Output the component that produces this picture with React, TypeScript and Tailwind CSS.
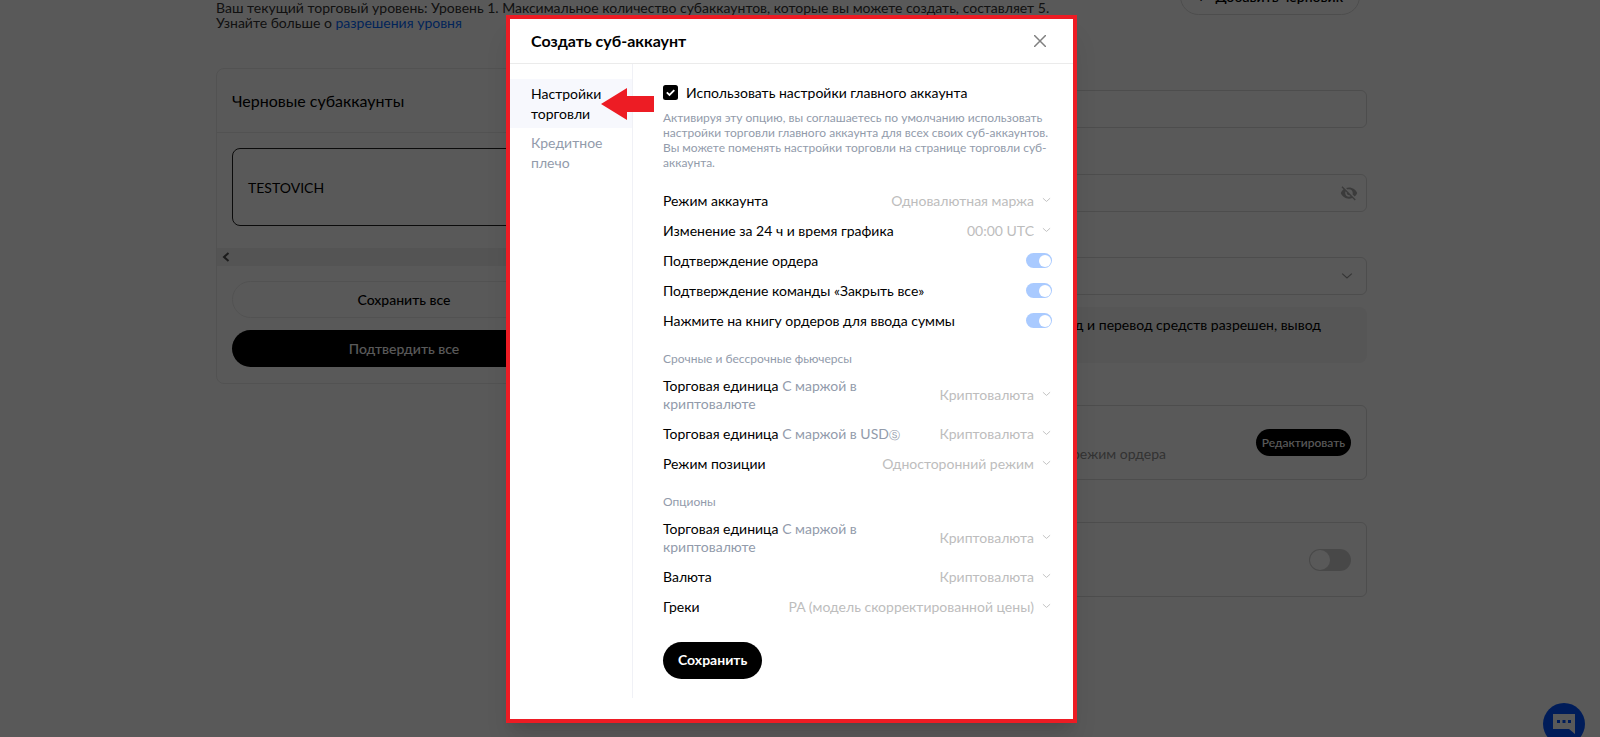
import { ReactNode, useId } from "react";

function Chevron({ className }: { className: string }) {
  return (
    <svg viewBox="0 0 10 6" fill="none" stroke="currentColor" className={className} aria-hidden="true">
      <path d="M1 1l4 3.6L9 1" />
    </svg>
  );
}

function SelectRow({ label, hint, value }: { label: string; hint?: ReactNode; value: string }) {
  const id = useId();
  return (
    <div className="flex items-center justify-between">
      <label htmlFor={id} className={hint ? "max-w-[250px]" : ""}>
        {label}
        {hint && <span className="text-[#929bab]"> {hint}</span>}
      </label>
      <div className="flex shrink-0 items-center gap-2 text-[#bdbdbd]">
        <select id={id} disabled className="h-[18px] appearance-none bg-transparent text-right leading-[18px] opacity-100">
          <option>{value}</option>
        </select>
        <Chevron className="mr-px mb-0.5 h-[6px] w-[9px]" />
      </div>
    </div>
  );
}

function SwitchRow({ label }: { label: string }) {
  const id = useId();
  return (
    <div className="flex items-center justify-between">
      <label htmlFor={id}>{label}</label>
      <input
        id={id}
        type="checkbox"
        role="switch"
        defaultChecked
        disabled
        className="flex h-[15px] w-[26px] appearance-none items-center justify-end rounded-full bg-[#a9caff] px-px before:size-3 before:rounded-full before:bg-white"
      />
    </div>
  );
}

function Section({ title, children }: { title: string; children: ReactNode }) {
  return (
    <section className="mt-5">
      <h3 className="mb-[9px] text-[12px] leading-[18px] text-[#929bab]">{title}</h3>
      <div className="flex flex-col gap-3">{children}</div>
    </section>
  );
}

function Drafts() {
  return (
    <section className="w-[376px] shrink-0 self-start rounded-lg border border-[#ebebeb] pb-4">
      <h2 className="border-b border-[#ebebeb] px-[15px] py-5 text-[16px] leading-[23px]">Черновые субаккаунты</h2>
      <div className="mx-[15px] mt-[15px] flex h-[78px] items-center rounded-lg border border-[#222] px-[15px]">TESTOVICH</div>
      <div className="mt-[22px] flex h-[18px] items-center bg-[#f1f1f1] pl-[5px] text-[#505050]">
        <svg viewBox="0 0 8 10" fill="none" stroke="currentColor" strokeWidth="2" className="h-[10px] w-2" aria-hidden="true">
          <path d="M6.5 1L2 5l4.500 4" />
        </svg>
      </div>
      <div className="mt-[15px] flex flex-col gap-3 px-[15px]">
        <button className="h-[37px] rounded-full border border-[#ebebeb] font-medium">Сохранить все</button>
        <button className="h-[37px] rounded-full bg-black font-medium text-white">Подтвердить все</button>
      </div>
    </section>
  );
}

function AccountForm() {
  return (
    <div className="min-w-0 flex-1 pt-[22px]">
      <input aria-label="Имя" className="block h-[38px] w-full rounded-md border border-[#dcdcdc]" />
      <div className="mt-[46px] flex h-[38px] items-center rounded-md border border-[#dcdcdc] pr-2">
        <input aria-label="Пароль" type="password" className="min-w-0 flex-1" />
        <svg viewBox="0 0 24 24" fill="#a8a8a8" className="size-[18px]" aria-hidden="true">
          <path d="M12 7c2.760 0 5 2.240 5 5 0 .65-.13 1.260-.36 1.830l2.920 2.920c1.510-1.260 2.700-2.890 3.430-4.750-1.730-4.390-6-7.500-11-7.500-1.400 0-2.740.25-3.980.7l2.160 2.160C10.740 7.130 11.350 7 12 7zM2 4.270l2.280 2.280.46.46C3.080 8.300 1.780 10.020 1 12c1.730 4.390 6 7.500 11 7.500 1.550 0 3.030-.3 4.380-.84l.42.42L19.730 22 21 20.730 3.270 3 2 4.270zM7.530 9.800l1.550 1.550c-.05.21-.08.43-.08.65 0 1.660 1.340 3 3 3 .22 0 .44-.03.65-.08l1.550 1.550c-.67.33-1.410.53-2.200.53-2.760 0-5-2.240-5-5 0-.79.2-1.530.53-2.200z" />
        </svg>
      </div>
      <div className="mt-[45px] flex h-[38px] items-center rounded-md border border-[#dcdcdc] pr-[13px]">
        <select aria-label="Тип" className="min-w-0 flex-1 appearance-none" />
        <Chevron className="h-2 w-3 text-[#999]" />
      </div>
      <p className="mt-3 h-14 rounded-lg bg-[#f5f5f5] py-2 pr-[46px] text-right leading-5">ввод и перевод средств разрешен, вывод</p>
      <div className="mt-[42px] flex h-[75px] items-center justify-between rounded-md border border-[#dcdcdc] px-[15px]">
        <p className="w-[534px] pt-[22px] text-right text-[#929292]">режим ордера</p>
        <button className="h-[27px] rounded-full bg-black px-1.5 text-[12px] font-medium text-white">Редактировать</button>
      </div>
      <div className="mt-[42px] flex h-[75px] items-center justify-end rounded-md border border-[#dcdcdc] px-[15px]">
        <input
          aria-label="Переключатель"
          type="checkbox"
          role="switch"
          className="flex h-[22px] w-[42px] appearance-none items-center rounded-full bg-[#cfcfcf] px-px before:size-5 before:rounded-full before:bg-white"
        />
      </div>
    </div>
  );
}

function Dialog() {
  return (
    <div role="dialog" aria-label="Создать суб-аккаунт" className="relative w-[571px] border-4 border-[#ed1c24] bg-white shadow-xl">
      <header className="flex h-[45px] items-center justify-between border-b border-[#ebebeb] pr-[27px] pl-[21px]">
        <h2 className="text-[16px] font-bold">Создать суб-аккаунт</h2>
        <button aria-label="Закрыть" className="text-[#808080]">
          <svg viewBox="0 0 12 12" stroke="currentColor" strokeWidth="1.500" className="size-3">
            <path d="M0 0l12 12M12 0L0 12" />
          </svg>
        </button>
      </header>
      <div className="flex pb-[21px]">
        <nav className="w-[123px] shrink-0 border-r border-[#f0f1f6] pt-[15px] leading-5">
          <a href="#trade" className="block bg-[#f7f8fd] pt-[5px] pr-4 pb-1 pl-[21px]">Настройки торговли</a>
          <a href="#leverage" className="block pt-[5px] pr-4 pb-1 pl-[21px] text-[#929bab]">Кредитное плечо</a>
        </nav>
        <form className="min-w-0 flex-1 pt-5 pr-[21px] pb-[19px] pl-[30px] leading-[18px]">
          <label className="flex items-center gap-2">
            <input type="checkbox" defaultChecked className="peer sr-only" />
            <svg viewBox="0 0 15 15" className="size-[15px]" aria-hidden="true">
              <rect width="15" height="15" rx="2.500" />
              <path d="M3.800 7.300l2.700 2.600 4.800-4.800" fill="none" stroke="#fff" strokeWidth="1.800" />
            </svg>
            Использовать настройки главного аккаунта
          </label>
          <p className="mt-2 text-[12px] leading-[15px] text-[#929bab]">
            Активируя эту опцию, вы соглашаетесь по умолчанию использовать настройки торговли главного аккаунта для всех своих суб-аккаунтов. Вы можете поменять настройки торговли на странице торговли суб-аккаунта.
          </p>
          <div className="mt-[22px] flex flex-col gap-3">
            <SelectRow label="Режим аккаунта" value="Одновалютная маржа" />
            <SelectRow label="Изменение за 24 ч и время графика" value="00:00 UTC" />
            <SwitchRow label="Подтверждение ордера" />
            <SwitchRow label="Подтверждение команды «Закрыть все»" />
            <SwitchRow label="Нажмите на книгу ордеров для ввода суммы" />
          </div>
          <Section title="Срочные и бессрочные фьючерсы">
            <SelectRow label="Торговая единица" hint="С маржой в криптовалюте" value="Криптовалюта" />
            <SelectRow
              label="Торговая единица"
              hint={<>С маржой в USD<span className="text-[11px] leading-none">Ⓢ</span></>}
              value="Криптовалюта"
            />
            <SelectRow label="Режим позиции" value="Односторонний режим" />
          </Section>
          <Section title="Опционы">
            <SelectRow label="Торговая единица" hint="С маржой в криптовалюте" value="Криптовалюта" />
            <SelectRow label="Валюта" value="Криптовалюта" />
            <SelectRow label="Греки" value="PA (модель скорректированной цены)" />
          </Section>
          <button type="button" className="mt-[26px] h-[37px] rounded-full bg-black px-[15px] font-bold text-white">
            Сохранить
          </button>
        </form>
      </div>
      <svg viewBox="0 0 53 32" fill="#ed1c24" className="absolute top-[69px] left-[91px] h-8 w-[53px]" aria-hidden="true">
        <path d="M0 16L26 0v8h27v16H26v8z" />
      </svg>
    </div>
  );
}

export default function App() {
  return (
    <div className="relative h-screen overflow-hidden bg-white font-['Lato','Noto_Sans',sans-serif] text-[14px] text-black">
      <div className="pr-[17px]">
        <div className="mx-auto max-w-[1151px]">
          <header className="flex justify-between">
            <p className="leading-[15px] text-[#333]">
              Ваш текущий торговый уровень: Уровень 1. Максимальное количество субаккаунтов, которые вы можете создать, составляет 5.
              <br />
              Узнайте больше о <a href="#levels" className="text-[#0569ff]">разрешения уровня</a>
            </p>
            <button className="-mt-[22px] mr-[7px] h-[37px] w-[180px] shrink-0 rounded-full border border-[#dcdcdc] font-semibold">
              +&nbsp;&nbsp; Добавить черновик
            </button>
          </header>
          <main className="mt-[38px] flex gap-6">
            <Drafts />
            <AccountForm />
          </main>
        </div>
      </div>
      <button aria-label="Чат" className="absolute right-[15px] -bottom-2 flex size-[42px] items-center justify-center rounded-full bg-[#0052ff]">
        <svg viewBox="0 0 22 20" className="h-5 w-[22px]" aria-hidden="true">
          <path d="M0 0h22v20l-6-5H0z" fill="#fff" />
          <path d="M4 6h3v3H4zM9.500 6h3v3h-3zM15 6h3v3h-3z" fill="#0052ff" />
        </svg>
      </button>
      <div className="absolute inset-0 flex items-center justify-center bg-black/65 pr-[17px]">
        <Dialog />
      </div>
    </div>
  );
}
